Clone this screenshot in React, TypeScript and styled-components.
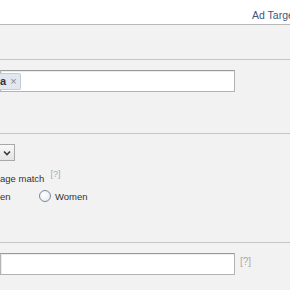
import React from "react";
import styled, { createGlobalStyle } from "styled-components";

const Global = createGlobalStyle`
  html, body {
    margin: 0;
    padding: 0;
    background: #f2f2f2;
    font-family: "Liberation Sans", Arial, sans-serif;
    font-size: 10px;
    color: #333;
  }
  body { overflow: hidden; }
`;

const Page = styled.div`
  width: 290px;
  height: 290px;
  overflow: hidden;
`;

const Header = styled.div`
  height: 25px;
  background: #fff;
  border-bottom: 1px solid #b9b9b9;
  display: flex;
  align-items: center;
  padding-left: 252px;
  padding-top: 5px;
  box-sizing: border-box;
  white-space: nowrap;
  font-size: 10.5px;
  color: #45557a;
`;

const Section = styled.div<{ $h: number; $last?: boolean }>`
  height: ${(p) => p.$h}px;
  border-bottom: ${(p) => (p.$last ? "none" : "1px solid #c6c6c6")};
  padding-top: 10px;
  box-sizing: border-box;
  display: flex;
  flex-direction: column;
`;

const Field = styled.div`
  display: flex;
  align-items: flex-start;
  gap: 5px;
`;

const TextBox = styled.div`
  width: 235px;
  height: 22px;
  box-sizing: border-box;
  background: #fff;
  border: 1px solid #b3b3b3;
  border-top-color: #9a9a9a;
  box-shadow: inset 1px 1px 0 #ececec;
  display: flex;
  align-items: center;
`;

const Token = styled.span`
  display: inline-flex;
  align-items: center;
  gap: 4px;
  height: 17px;
  padding: 0 3px 0 1px;
  margin-left: -2px;
  background: #e1e6ef;
  border: 1px solid #c3cbdb;
  border-left: none;
  border-radius: 0 2px 2px 0;
  font-weight: bold;
  font-size: 11px;
  color: #333;
  box-sizing: border-box;
`;

const Remove = styled.span`
  font-weight: normal;
  color: #8c8c8c;
  font-size: 11px;
`;

const Select = styled.div`
  width: 15px;
  height: 17px;
  box-sizing: border-box;
  border: 1px solid #a8a8a8;
  border-left: none;
  background: linear-gradient(#f8f8f8, #e4e4e4);
  display: flex;
  align-items: center;
  justify-content: center;
`;

const Label = styled.div`
  margin-top: 12px;
  display: flex;
  gap: 6px;
  color: #333;
  font-size: 9.5px;
`;

const Hint = styled.span`
  color: #aaa;
  font-size: 9px;
  position: relative;
  top: -4px;
`;

const RadioRow = styled.div`
  margin-top: 4px;
  display: flex;
  align-items: center;
  height: 16px;
  font-size: 9.5px;
`;

const Option = styled.label<{ $w?: number }>`
  display: flex;
  align-items: center;
  gap: 4px;
  width: ${(p) => (p.$w ? `${p.$w}px` : "auto")};
`;

const Radio = styled.span`
  width: 12px;
  height: 12px;
  border-radius: 50%;
  border: 1px solid #7d889a;
  background: radial-gradient(circle at 40% 40%, #fff, #e2e6ec);
  box-sizing: border-box;
`;

const Help = styled.span`
  color: #aaa;
  font-size: 10px;
  margin-top: 3px;
`;

export default function App() {
  return (
    <Page>
      <Global />
      <Header>Ad Targe</Header>
      <Section $h={35} />
      <Section $h={74}>
        <TextBox>
          <Token>
            a<Remove>×</Remove>
          </Token>
        </TextBox>
      </Section>
      <Section $h={109}>
        <Select>
          <svg width="8" height="6" viewBox="0 0 8 6">
            <path d="M1 1.5 L4 4.5 L7 1.5" fill="none" stroke="#3a3a3a" strokeWidth="1.6" />
          </svg>
        </Select>
        <Label>
          <span>age match</span>
          <Hint>[?]</Hint>
        </Label>
        <RadioRow>
          <Option $w={39}>en</Option>
          <Option>
            <Radio />
            Women
          </Option>
        </RadioRow>
      </Section>
      <Section $h={47} $last>
        <Field>
          <TextBox />
          <Help>[?]</Help>
        </Field>
      </Section>
    </Page>
  );
}
